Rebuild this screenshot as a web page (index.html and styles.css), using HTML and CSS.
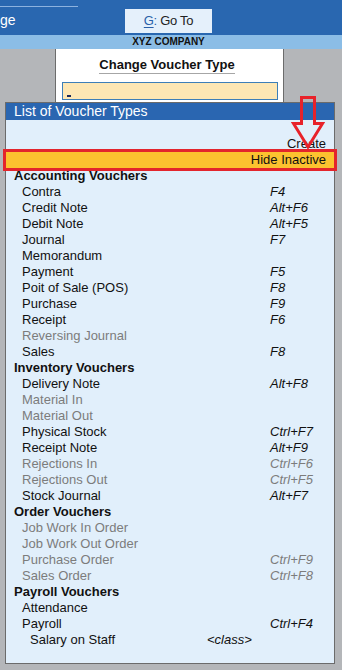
FILE: index.html
```html
<!DOCTYPE html>
<html>
<head>
<meta charset="utf-8">
<link rel="stylesheet" href="styles.css">
</head>
<body>
<div class="topbar">
  <div class="crumb">ge</div>
  <div class="goto"><span class="key">G</span><span class="colon">:</span> Go To</div>
</div>
<div class="company"><span>XYZ COMPANY</span></div>
<div class="panel">
  <div class="ptitle"><span>Change Voucher Type</span></div>
  <div class="field"><span class="cursor"></span></div>
</div>
<div class="list">
  <svg class="arrow" width="40" height="60" viewBox="0 0 40 60"><polygon points="12.5,4.5 25.5,4.5 25.5,30.5 33.5,30.5 19,54 4.5,30.5 12.5,30.5" fill="none" stroke="#e8222a" stroke-width="3"/></svg>
  <div class="lhead">List of Voucher Types</div>
  <div class="lbody">
    <div class="act">Create</div>
    <div class="act hide">Hide Inactive</div>
    <div class="grp">Accounting Vouchers</div>
    <div class="row"><span>Contra</span><i>F4</i></div>
    <div class="row"><span>Credit Note</span><i>Alt+F6</i></div>
    <div class="row"><span>Debit Note</span><i>Alt+F5</i></div>
    <div class="row"><span>Journal</span><i>F7</i></div>
    <div class="row"><span>Memorandum</span><i></i></div>
    <div class="row"><span>Payment</span><i>F5</i></div>
    <div class="row"><span>Poit of Sale (POS)</span><i>F8</i></div>
    <div class="row"><span>Purchase</span><i>F9</i></div>
    <div class="row"><span>Receipt</span><i>F6</i></div>
    <div class="row off"><span>Reversing Journal</span><i></i></div>
    <div class="row"><span>Sales</span><i>F8</i></div>
    <div class="grp">Inventory Vouchers</div>
    <div class="row"><span>Delivery Note</span><i>Alt+F8</i></div>
    <div class="row off"><span>Material In</span><i></i></div>
    <div class="row off"><span>Material Out</span><i></i></div>
    <div class="row"><span>Physical Stock</span><i>Ctrl+F7</i></div>
    <div class="row"><span>Receipt Note</span><i>Alt+F9</i></div>
    <div class="row off"><span>Rejections In</span><i>Ctrl+F6</i></div>
    <div class="row off"><span>Rejections Out</span><i>Ctrl+F5</i></div>
    <div class="row"><span>Stock Journal</span><i>Alt+F7</i></div>
    <div class="grp">Order Vouchers</div>
    <div class="row off"><span>Job Work In Order</span><i></i></div>
    <div class="row off"><span>Job Work Out Order</span><i></i></div>
    <div class="row off"><span>Purchase Order</span><i>Ctrl+F9</i></div>
    <div class="row off"><span>Sales Order</span><i>Ctrl+F8</i></div>
    <div class="grp">Payroll Vouchers</div>
    <div class="row"><span>Attendance</span><i></i></div>
    <div class="row"><span>Payroll</span><i>Ctrl+F4</i></div>
    <div class="row sub"><span>Salary on Staff</span><i>&lt;class&gt;</i></div>
  </div>
</div>
</body>
</html>
```
FILE: styles.css
```css
html, body {
  margin: 0;
  padding: 0;
}
body {
  background: #b4b6b9;
  font-family: "Liberation Sans", Arial, sans-serif;
  color: #111;
  width: 342px;
  height: 670px;
  overflow: hidden;
}
.topbar {
  height: 35px;
  background: #2967b0;
  display: flex;
  align-items: flex-start;
}
.crumb {
  width: 78px;
  margin-top: 6px;
  border-top: 1px solid #8cb2df;
  padding-top: 5px;
  font-size: 14px;
  line-height: 16px;
  color: #fff;
}
.goto {
  margin-left: 47px;
  margin-top: 9px;
  width: 87px;
  height: 24px;
  line-height: 24px;
  background: #e5f0fb;
  text-align: center;
  font-size: 13px;
  letter-spacing: -0.3px;
  color: #222;
}
.goto .key {
  color: #2a5fa8;
  text-decoration: underline;
  text-underline-offset: 2px;
}
.goto .colon {
  color: #2a5fa8;
}
.company {
  height: 14px;
  background: #8bbde6;
  display: flex;
  justify-content: center;
  padding-right: 5px;
  font-size: 10px;
  font-weight: bold;
  line-height: 14px;
  color: #111;
}
.panel {
  margin-left: 55px;
  width: 229px;
  height: 53px;
  box-sizing: border-box;
  background: #fff;
  border-left: 1px solid #6c6c6c;
  border-right: 1px solid #6c6c6c;
  padding-top: 8px;
}
.ptitle {
  display: flex;
  justify-content: center;
  padding-right: 5px;
}
.ptitle span {
  font-size: 13px;
  font-weight: bold;
  line-height: 16px;
  border-bottom: 1px solid #a6a6a6;
  color: #111;
}
.field {
  margin-top: 8px;
  margin-left: 6px;
  width: 216px;
  height: 18px;
  box-sizing: border-box;
  background: #fde7b4;
  border: 1px solid #3d7fb8;
  display: flex;
  align-items: flex-end;
}
.cursor {
  width: 4px;
  height: 2px;
  background: #1c2a5a;
  margin-left: 4px;
  margin-bottom: 2px;
}
.list {
  position: relative;
  margin-left: 5px;
  width: 330px;
  box-sizing: border-box;
  border: 1px solid #6b6b6b;
  background: #e1effb;
}
.arrow {
  position: absolute;
  left: 283px;
  top: -10px;
}
.lhead {
  height: 17px;
  line-height: 17px;
  background: #2a66b1;
  color: #fff;
  font-size: 14px;
  padding-left: 8px;
}
.lbody {
  padding-top: 16px;
  padding-bottom: 15px;
  font-size: 13px;
  line-height: 16px;
}
.act {
  text-align: right;
  padding-right: 8px;
  height: 16px;
}
.hide {
  background: #fcc22f;
  outline: 3px solid #e3252c;
  position: relative;
}
.grp {
  font-weight: bold;
  padding-left: 8px;
  height: 16px;
}
.row {
  display: grid;
  grid-template-columns: 264px 1fr;
  height: 16px;
}
.row span {
  padding-left: 16px;
}
.row i {
  font-style: italic;
}
.row.off {
  color: #7c7c7c;
}
.row.sub {
  grid-template-columns: 201px 1fr;
}
.row.sub span {
  padding-left: 24px;
}
```
